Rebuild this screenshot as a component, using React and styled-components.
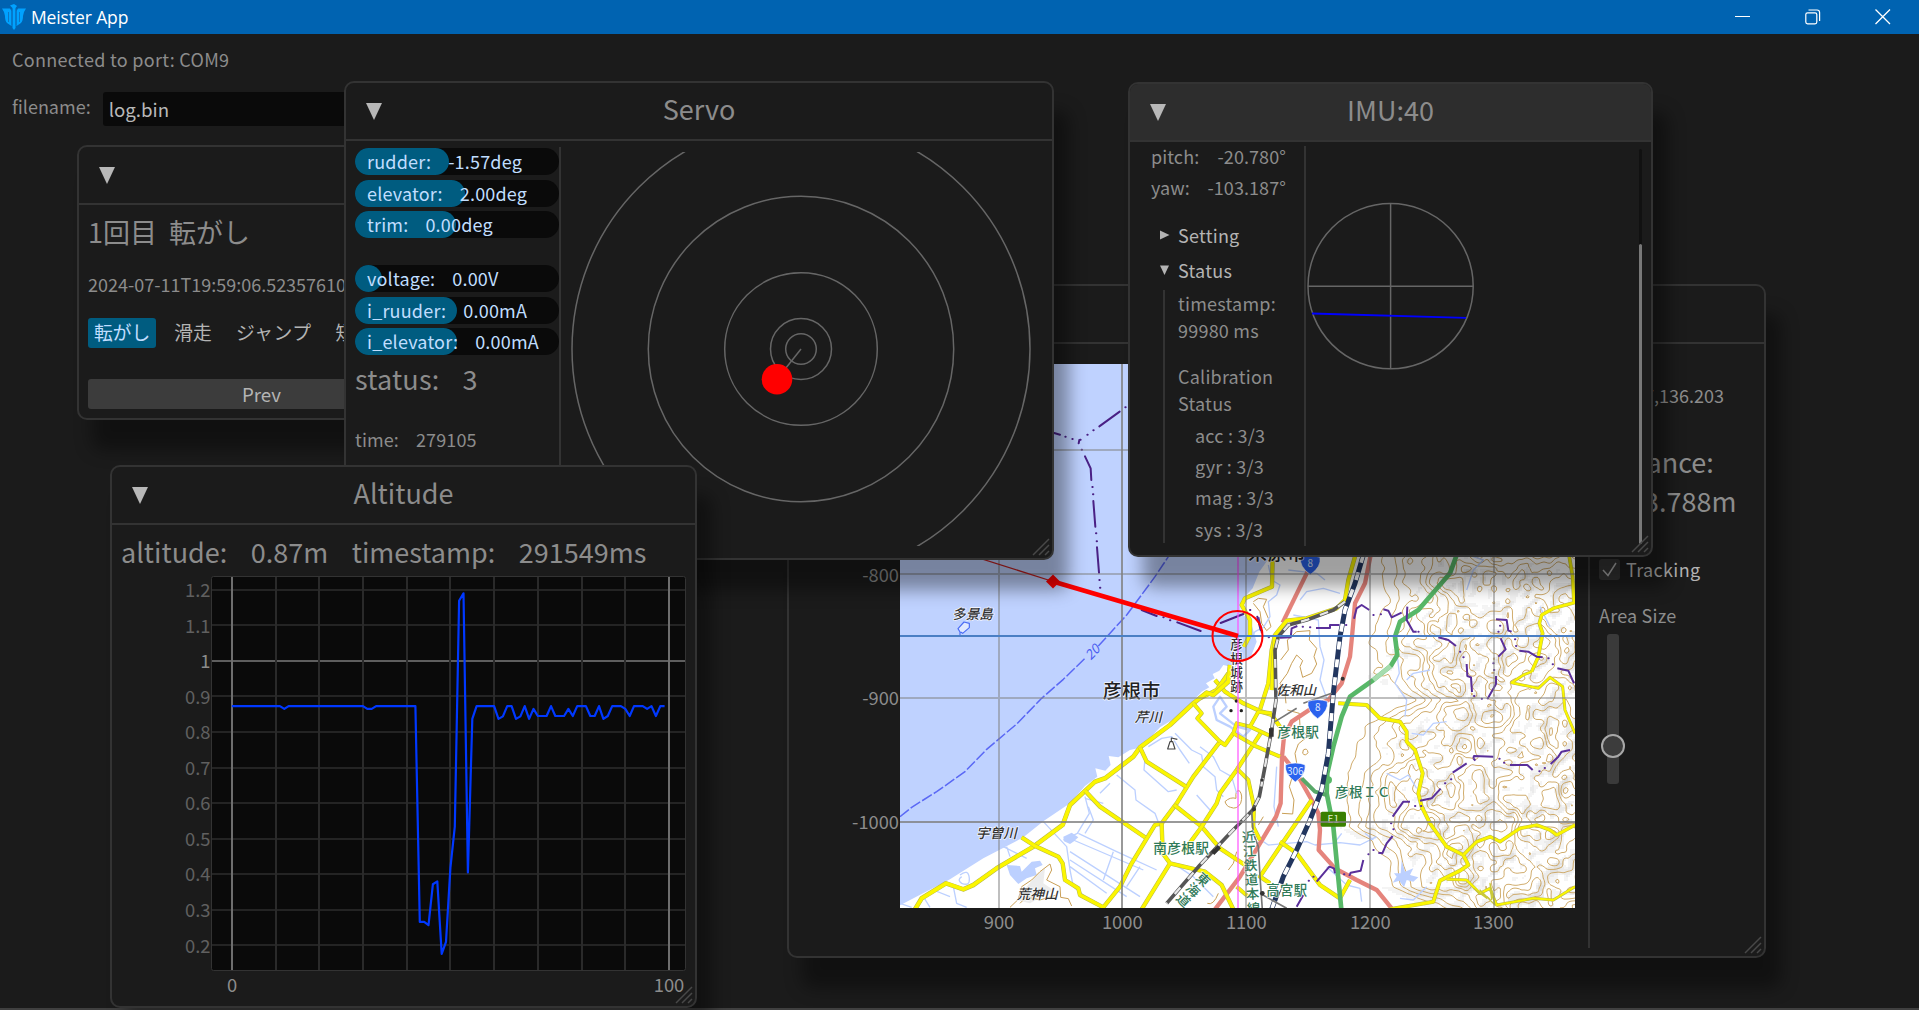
import React from "react";
import styled, { createGlobalStyle } from "styled-components";

const SANS = `"Noto Sans CJK JP", "Noto Sans", sans-serif`;

const Global = createGlobalStyle`
  *, *::before, *::after { box-sizing: border-box; }
  body {
    margin: 0;
    background: #1b1b1b;
    overflow: hidden;
    font-family: ${SANS};
    font-size: 18px;
    color: #8c8c8c;
  }
`;

const Screen = styled.div`
  width: 1919px;
  height: 1010px;
  display: flex;
  flex-direction: column;
  background: #1b1b1b;
  overflow: hidden;
`;

const TitleBar = styled.header`
  flex: none;
  height: 34px;
  display: flex;
  align-items: center;
  background: #0063b1;
  color: #fff;
`;

const AppIcon = styled.svg`
  width: 24px;
  height: 26px;
  margin-left: 2px;
`;

const AppName = styled.div`
  flex: 1;
  margin-left: 5px;
  font-family: "Open Sans", "Noto Sans", sans-serif;
  font-size: 17.5px;
  line-height: 34px;
  letter-spacing: -0.12px;
`;

const Caption = styled.button`
  width: 70px;
  height: 34px;
  padding: 0 2px 0 0;
  border: 0;
  background: none;
  display: grid;
  place-items: center;
  svg { display: block; fill: none; stroke: #fff; }
`;

const Desktop = styled.main`
  position: relative;
  flex: 1;
  border-bottom: 2px solid #404040;
`;

const Root = styled.div`
  padding: 9px 12px;
`;

const PortLine = styled.div`
  line-height: 32px;
  letter-spacing: 0.3px;
`;

const FileRow = styled.div`
  display: flex;
  align-items: flex-start;
  gap: 12px;
  margin-top: 17px;
  line-height: 28px;
`;

const FileInput = styled.div`
  width: 420px;
  height: 34px;
  padding-left: 6px;
  border-radius: 3px;
  background: #0a0a0a;
  color: #b8b8b8;
  font-size: 18.7px;
  line-height: 34px;
`;

const Frame = styled.section`
  position: absolute;
  left: ${(p) => p.$x}px;
  top: ${(p) => p.$y - 34}px;
  width: ${(p) => p.$w}px;
  height: ${(p) => p.$h}px;
  display: flex;
  flex-direction: column;
  border: 2px solid #333;
  border-radius: 10px;
  background: #1b1b1b;
  box-shadow: 15px 30px 17px rgba(0, 0, 0, 0.376);
`;

const FrameHead = styled.div`
  flex: none;
  height: 58px;
  display: grid;
  grid-template-columns: 58px 1fr 58px;
  align-items: center;
  border-bottom: 2px solid #333;
  border-radius: 8px 8px 0 0;
  background: ${(p) => (p.$active ? "#2d2d2d" : "transparent")};
`;

const Fold = styled.svg`
  width: 16px;
  height: 17px;
  margin-left: 20px;
  fill: #b8b8b8;
`;

const FrameTitle = styled.div`
  text-align: center;
  font-size: 27px;
  line-height: 56px;
  margin-top: -4px;
`;

const FrameBody = styled.div`
  flex: 1;
  min-height: 0;
  display: flex;
  flex-direction: ${(p) => (p.$row ? "row" : "column")};
`;

const Grip = styled.svg`
  position: absolute;
  right: 2px;
  bottom: 2px;
  width: 18px;
  height: 18px;
  stroke: #484848;
  stroke-width: 1.5;
`;

function Win({ x, y, w, h, title, active, row, grip = true, children }) {
  return (
    <Frame $x={x} $y={y} $w={w} $h={h}>
      <FrameHead $active={active}>
        <Fold viewBox="0 0 16 17"><path d="M0 0H16L8 17Z" /></Fold>
        <FrameTitle>{title}</FrameTitle>
      </FrameHead>
      <FrameBody $row={row}>{children}</FrameBody>
      {grip && (
        <Grip viewBox="0 0 18 18"><path d="M1 17L17 1M7 17L17 7M13 17L17 13" /></Grip>
      )}
    </Frame>
  );
}

/* ---------- log window ---------- */

const LogBody = styled.div`
  padding: 7px 9px;
  display: flex;
  flex-direction: column;
`;

const Heading = styled.div`
  font-size: 27px;
  line-height: 39px;
  margin-top: ${(p) => p.$mt || 0}px;
  white-space: pre;
`;

const Stamp = styled.div`
  margin-top: 19px;
  line-height: 28px;
  white-space: nowrap;
`;

const Chips = styled.div`
  display: flex;
  gap: 12px;
  margin-top: 20px;
`;

const Chip = styled.div`
  height: 30px;
  padding: 0 6px;
  border-radius: 3px;
  font-size: 18.8px;
  letter-spacing: ${(p) => (p.$wide ? 0.5 : 0)}px;
  line-height: 28px;
  background: ${(p) => (p.$on ? "#005c80" : "transparent")};
  color: ${(p) => (p.$on ? "#c0deff" : "#b4b4b4")};
`;

const NavRow = styled.div`
  display: flex;
  gap: 12px;
  margin-top: 31px;
`;

const NavButton = styled.div`
  width: 347px;
  height: 30px;
  border-radius: 3px;
  background: #3c3c3c;
  color: #b4b4b4;
  text-align: center;
  line-height: 29px;
  font-size: 18.7px;
`;

/* ---------- servo window ---------- */

const ServoSide = styled.div`
  width: 213px;
  padding: 7px 0 0 9px;
  display: flex;
  flex-direction: column;
`;

const Rule = styled.div`
  width: 2px;
  margin: ${(p) => p.$m || "6px 0 10px"};
  background: #333;
`;

const Bar = styled.div`
  position: relative;
  height: 27px;
  width: 204px;
  margin-bottom: 4.5px;
  margin-top: ${(p) => p.$mt || 0}px;
  border-radius: 14px;
  background: #0a0a0a;
  display: flex;
  gap: 17px;
  padding-left: 12px;
  color: #c0deff;
  line-height: 27.4px;
  letter-spacing: 0.2px;
  white-space: nowrap;
  span { position: relative; }
  &::before {
    content: "";
    position: absolute;
    left: 0;
    top: 0;
    height: 27px;
    width: ${(p) => p.$fill}px;
    border-radius: 14px;
    background: #005c80;
  }
`;

const Pair = styled.div`
  display: flex;
  gap: ${(p) => p.$gap}px;
  margin-top: ${(p) => p.$mt || 0}px;
  line-height: ${(p) => p.$lh || 28}px;
  font-size: ${(p) => p.$size || 18}px;
  letter-spacing: ${(p) => p.$track || 0}px;
  white-space: pre;
`;

const Plot = styled.svg`
  display: block;
  flex: none;
  margin: ${(p) => p.$m};
  text { font-family: ${SANS}; }
`;

const meters = [
  ["rudder:", "-1.57deg", 94, 0],
  ["elevator:", "2.00deg", 110, 0],
  ["trim:", "0.00deg", 101, 0],
  ["voltage:", "0.00V", 27, 22.5],
  ["i_ruuder:", "0.00mA", 101.5, 0],
  ["i_elevator:", "0.00mA", 101.5, 0],
];

function Servo() {
  return (
    <Win x={344} y={81} w={710} h={479} title="Servo" row>
      <ServoSide>
        {meters.map(([k, v, f, mt]) => (
          <Bar key={k} $fill={f} $mt={mt}><span>{k}</span><span>{v}</span></Bar>
        ))}
        <Pair $gap={23} $size={27} $lh={37} $track={0.2}><span>status:</span><span>3</span></Pair>
        <Pair $gap={17} $mt={28} $track={0.12}><span>time:</span><span>279105</span></Pair>
      </ServoSide>
      <Rule />
      <Plot $m="11px 0 0 9px" width="470" height="394" viewBox="570 152 470 394">
        <g fill="none" stroke="#666" strokeWidth="1.5">
          {[15.3, 30.5, 76.3, 152.7, 229].map((r) => (
            <circle key={r} cx="801" cy="349" r={r} />
          ))}
          <path d="M801 349L777 379.3" />
        </g>
        <circle cx="777" cy="379.3" r="15.3" fill="#f00" />
      </Plot>
    </Win>
  );
}

/* ---------- altitude window ---------- */

const V = 0.873;
const altitude = [
  ...Array(12).fill(V), 0.865, ...Array(18).fill(V), 0.865, 0.865, ...Array(10).fill(V),
  0.266, 0.266, 0.257, 0.372, 0.38, 0.176, 0.21, 0.418, 0.534, 1.169, 1.19, 0.405, 0.837,
  V, V, V, V, V, 0.837, 0.844, V, V, 0.837, 0.844, V, 0.837, 0.865, 0.845, 0.845, 0.845, V,
  0.845, 0.845, 0.845, 0.865, 0.845, V, V, V, 0.845, 0.845, V, 0.837, 0.845, V, V, V, 0.865,
  0.845, V, V, V, 0.865, V, 0.845, V, V,
];
const ax = (i) => 231.8 + i * 4.372;
const ay = (v) => 660.9 - (v - 1) * 355.6;

const AltBody = styled.div`
  display: flex;
  flex-direction: column;
  padding-left: 9px;
`;

function Altitude() {
  const levels = [0.2, 0.3, 0.4, 0.5, 0.6, 0.7, 0.8, 0.9, 1, 1.1, 1.2];
  return (
    <Win x={110} y={465} w={587} h={543} title="Altitude">
      <AltBody>
        <Pair $gap={23.5} $size={27} $lh={39} $mt={7}>
          <span>altitude:</span><span>0.87m</span><span>timestamp:</span><span>291549ms</span>
        </Pair>
        <Plot $m="4px 0 0 0" width="570" height="426" viewBox="121 575 570 426">
          <rect x="211.5" y="576.5" width="474" height="394" rx="2" fill="#0a0a0a" stroke="#333" strokeWidth="1" />
          <g stroke="#262626" strokeWidth="2">
            {levels.map((v) => (
              <path key={v} d={`M212 ${Math.round(ay(v))}H685`} stroke={v === 1 ? "#5e5e5e" : "#242424"} />
            ))}
            {Array.from({ length: 11 }, (_, i) => (
              <path key={i} d={`M${Math.round(ax(i * 10))} 577V970`} stroke={i % 10 ? "#2a2a2a" : "#6e6e6e"} />
            ))}
          </g>
          <polyline
            points={altitude.map((v, i) => `${ax(i).toFixed(1)},${ay(v).toFixed(1)}`).join(" ")}
            fill="none" stroke="#0038ff" strokeWidth="2.2" strokeLinejoin="round"
          />
          <g fontSize="18.4" textAnchor="end" fill="#606060">
            {levels.map((v) => (
              <text key={v} x="210.5" y={ay(v) + 7.2} fill={v === 1 ? "#8c8c8c" : "#606060"}>{v}</text>
            ))}
          </g>
          <g fontSize="18.4" textAnchor="middle" fill="#8c8c8c">
            <text x="232" y="992">0</text>
            <text x="669" y="992">100</text>
          </g>
        </Plot>
      </AltBody>
    </Win>
  );
}

/* ---------- IMU window ---------- */

const ImuSide = styled.div`
  width: 174px;
  padding: 0 0 0 21px;
  display: flex;
  flex-direction: column;
`;

const Reading = styled.div`
  display: flex;
  justify-content: space-between;
  width: 135px;
  height: 31.2px;
  line-height: 28px;
  letter-spacing: 0.08px;
`;

const Tree = styled.div`
  display: flex;
  align-items: center;
  gap: 8px;
  margin-top: ${(p) => p.$mt}px;
  padding-left: 8px;
  height: 28px;
  color: #b4b4b4;
  line-height: 28px;
  letter-spacing: 0.25px;
  svg { width: 11px; height: 10px; fill: #b4b4b4; margin-bottom: 1px; }
`;

const Branch = styled.div`
  margin: 6px 0 0 12px;
  padding-left: 13px;
  height: 253px;
  border-left: 2px solid #333;
  line-height: 27px;
  letter-spacing: 0.22px;
`;

const CalTitle = styled.div`
  margin-top: 19px;
`;

const CalList = styled.div`
  padding-left: 17px;
  margin-top: 2.5px;
  line-height: 31.3px;
`;

const ScrollTrack = styled.div`
  width: 3px;
  margin: 7px 9px 11px auto;
  background: #111;
  border-radius: 2px;
  display: flex;
  flex-direction: column;
  justify-content: flex-end;
`;

const ScrollThumb = styled.div`
  height: 300px;
  border-radius: 2px;
  background: #787878;
`;

function Imu() {
  return (
    <Win x={1128} y={82} w={525} h={475} title="IMU:40" active row>
      <ImuSide>
        <Reading><span>pitch:</span><span>-20.780°</span></Reading>
        <Reading><span>yaw:</span><span>-103.187°</span></Reading>
        <Tree $mt={17}>
          <svg viewBox="0 0 11 10"><path d="M1 0.5V9.5L10.5 5Z" /></svg>Setting
        </Tree>
        <Tree $mt={7}>
          <svg viewBox="0 0 11 10"><path d="M1 0.5H10L5.5 10Z" /></svg>Status
        </Tree>
        <Branch>
          <div>timestamp:<br />99980 ms</div>
          <CalTitle>Calibration<br />Status</CalTitle>
          <CalList>
            {["acc", "gyr", "mag", "sys"].map((s) => <div key={s}>{s} : 3/3</div>)}
          </CalList>
        </Branch>
      </ImuSide>
      <Rule $m="4px 0 9px" />
      <Plot $m="56px 0 0 -1px" width="176" height="180" viewBox="1305 198 176 180">
        <g fill="none" stroke="#666" strokeWidth="1.5">
          <circle cx="1390.6" cy="286.2" r="82.6" />
          <path d="M1390.6 203.6V368.8M1308 286.2H1473" />
          <path d="M1312 313.5L1466 317.8" stroke="#00f" strokeWidth="1.8" />
        </g>
      </Plot>
      <ScrollTrack><ScrollThumb /></ScrollTrack>
    </Win>
  );
}

/* ---------- map window ---------- */

const MapSide = styled.div`
  flex: 1;
  padding: 37px 0 0 9px;
  display: flex;
  flex-direction: column;
`;

const Coords = styled.div`
  line-height: 28px;
  height: 28px;
`;

const CheckRow = styled.div`
  display: flex;
  align-items: center;
  gap: 6px;
  height: 28px;
  margin-top: 35px;
  color: #b4b4b4;
  letter-spacing: 0.35px;
`;

const CheckBox = styled.svg`
  width: 21px;
  height: 21px;
  border-radius: 3px;
  background: #333;
  fill: none;
  stroke: #a8a8a8;
  stroke-width: 1.5;
`;

const SliderLabel = styled.div`
  margin-top: 18px;
  line-height: 28px;
  letter-spacing: 0.2px;
`;

const SliderRail = styled.div`
  position: relative;
  width: 12px;
  height: 150px;
  margin: 5px 0 0 8px;
  border-radius: 3px;
  background: #3a3a3a;
`;

const SliderKnob = styled.div`
  position: absolute;
  left: -6px;
  top: 100px;
  width: 24px;
  height: 24px;
  border-radius: 50%;
  border: 2px solid #a8a8a8;
  background: #3c3c3c;
`;

/* smooth value noise for the terrain */
const hash = (x, y) => {
  const s = Math.sin(x * 127.1 + y * 311.7) * 43758.5453;
  return s - Math.floor(s);
};
const noise = (x, y) => {
  const xi = Math.floor(x), yi = Math.floor(y);
  const f = (t) => t * t * (3 - 2 * t);
  const u = f(x - xi), v = f(y - yi);
  const a = hash(xi, yi), b = hash(xi + 1, yi), c = hash(xi, yi + 1), d = hash(xi + 1, yi + 1);
  return a + (b - a) * u + (c - a) * v + (a - b - c + d) * u * v;
};
/* western foot of the hills at each height, in map detail units */
const foot = [[40, 505], [180, 520], [300, 460], [400, 470], [480, 600], [560, 440], [700, 390], [860, 410], [900, 480], [960, 520], [1040, 540], [1110, 700]];
const footAt = (y) => {
  for (let i = 1; i < foot.length; i++) {
    if (y <= foot[i][0]) {
      const [y0, x0] = foot[i - 1], [y1, x1] = foot[i];
      return x0 + ((x1 - x0) * (y - y0)) / (y1 - y0);
    }
  }
  return 700;
};
const height = (x, y) => {
  const edge = Math.min(1, Math.max(0, (x - footAt(y)) / 240));
  return edge * (0.25 + 0.55 * noise(x / 125, y / 125) + 0.42 * noise(x / 44 + 9, y / 44) + 0.22 * noise(x / 21, y / 21 + 5));
};
const terrain = (() => {
  const S = 6;
  let lines = "";
  const shade = ["", "", ""];
  const levels = [0.16, 0.3, 0.44, 0.58, 0.72, 0.86, 1.0, 1.14];
  for (let y = 45; y < 1110; y += S) {
    for (let x = 390; x < 1130; x += S) {
      const a = height(x, y), b = height(x + S, y), c = height(x + S, y + S), d = height(x, y + S);
      const slope = a - c;
      if (slope > 0.015) {
        const k = slope > 0.085 ? 2 : slope > 0.045 ? 1 : 0;
        shade[k] += `M${x} ${y}h${S}v${S}h-${S}z`;
      }
      for (const l of levels) {
        const p = [];
        if (a < l !== b < l) p.push([x + (S * (l - a)) / (b - a), y]);
        if (b < l !== c < l) p.push([x + S, y + (S * (l - b)) / (c - b)]);
        if (d < l !== c < l) p.push([x + (S * (l - d)) / (c - d), y + S]);
        if (a < l !== d < l) p.push([x, y + (S * (l - a)) / (d - a)]);
        for (let i = 0; i + 1 < p.length; i += 2) {
          lines += `M${p[i][0].toFixed(1)} ${p[i][1].toFixed(1)}L${p[i + 1][0].toFixed(1)} ${p[i + 1][1].toFixed(1)}`;
        }
      }
    }
  }
  return { lines, shade };
})();

const Road = ({ d, w = 10 }) => (
  <>
    <path d={d} stroke="#b8b84a" strokeWidth={w + 3} />
    <path d={d} stroke="#fbf600" strokeWidth={w} />
  </>
);

const Rail = ({ d, w = 9, dark = "#555", light = "#e8e8e8", dash = "26 34" }) => (
  <>
    <path d={d} stroke={dark} strokeWidth={w} />
    <path d={d} stroke={light} strokeWidth={w - 4} strokeDasharray={dash} />
  </>
);

const Shield = ({ x, y, n }) => (
  <g transform={`translate(${x} ${y})`}>
    <path d="M-29 -20Q0 -30 29 -20Q34 8 0 32Q-34 8 -29 -20Z" fill="#2b62ee" stroke="#fff" strokeWidth="2" />
    <text y="10" textAnchor="middle" fill="#dfe8ff" fontSize="30" textLength={n.length > 1 ? 50 : undefined} lengthAdjust="spacingAndGlyphs">{n}</text>
  </g>
);

const Label = ({ x, y, size = 40, fill = "#333", italic, rot, vertical, children, sp = 0 }) => (
  <text
    x={x} y={y} fontSize={size} fill={fill} letterSpacing={sp} fontWeight="500"
    fontStyle={italic ? "italic" : "normal"}
    writingMode={vertical ? "vertical-rl" : undefined}
    transform={rot ? `rotate(${rot} ${x} ${y})` : undefined}
    stroke="#fff" strokeWidth="5" strokeOpacity="0.75" paintOrder="stroke" strokeLinejoin="round"
  >
    {children}
  </text>
);

const coast =
  "M1300 -700V0L1290 20L1258 65L1238 115L1205 150L1200 185L1232 215L1250 275L1232 322L1180 340L1172 350L1150 345L1138 362L1118 372L1124 385L1098 400L1108 412L1085 425L1050 462L1000 508L960 532L905 592L870 600L835 622L806 618L812 645L796 662L766 655L772 680L735 708L690 760L612 812L550 862L430 925L330 988L180 1066V1120H2300V-700Z";

function MapArt() {
  return (
    <>
      <rect x="900" y="364" width="675" height="544" fill="#bfd2ff" />
      <g transform="translate(840 550) scale(0.33333)" fill="none" strokeLinejoin="round" strokeLinecap="butt">
        <path d={coast} fill="#fff" />
        <g transform="translate(1080 -30)">
          <path d={terrain.shade[0]} fill="#f4f4f4" />
          <path d={terrain.shade[1]} fill="#ebebeb" />
          <path d={terrain.shade[2]} fill="#e0e0e0" />
          <path d={terrain.lines} stroke="#cba35c" strokeWidth="2.7" />
          <g stroke="#c99f55" strokeWidth="3">
            <path d="M160 185L175 175L200 178L190 200L205 235L213 260L200 272L185 250L180 215L160 190" />
            <path d="M242 360L265 330L262 300L290 275L330 272L328 300L350 325L342 350L350 372L335 400L308 412L300 380L308 362L290 345L275 370L262 400L240 430L255 460L258 490" />
            <path d="M262 510L298 520L300 560L322 590L295 612L285 640L292 680L280 700L268 740L282 780L278 822L246 820" />
            <path d="M310 630Q322 622 324 638Q316 650 308 640Z" />
            <path d="M75 785Q90 770 108 775Q105 750 118 752Q130 765 122 790Q110 810 92 802Q80 800 75 785Z" />
            <path d="M55 1060Q40 1098 22 1090M110 935L100 970L85 990M190 830L175 855" />
          </g>
          <g stroke="#bcd0ff" strokeWidth="4">
            <path d="M205 75L215 120L240 135L230 165L205 185L210 230L190 262L165 275L130 340L100 390" />
            <path d="M265 90L350 100L375 120M300 180L320 155L370 145L420 160M280 225L355 240L360 320L372 360L360 420L382 480" />
            <path d="M590 330L598 400L585 430L620 480L615 530M620 420L640 400L690 390M740 545L700 550L670 585L635 580" />
            <path d="M190 905L205 915L320 905L345 915L420 908L480 915L530 890M410 900L425 880M230 680L222 800L235 860" />
            <path d="M0 620L40 650L60 690L95 710L110 760M380 980L440 1035L480 1045L485 1085M680 1040L640 1080L600 1075M820 50L850 60L820 90L800 150" />
            <path d="M495 880L520 900M1020 200L1050 260M560 700L600 720L625 705L650 745" />
            <path d="M40 500L60 470L80 500L60 520L110 560L150 570L130 590L90 560L50 540Z" strokeWidth="7" />
          </g>
          <path d="M605 960L615 995L640 985L630 1005L655 1012L640 1025L620 1020L612 1042L598 1022L578 1028L590 1010L582 1000L602 1000Z" fill="#bcd0ff" />
        </g>
        <g stroke="#bcd0ff" strokeWidth="4">
          <path d="M1005 550L1055 600L1085 615L1090 650L1125 680L1130 720L1150 740M925 590L965 565L995 560L1020 600L1048 640M915 625L912 660L985 725L1010 720M830 675L885 720L888 750L945 790L960 830M735 740L748 790L712 850L670 870M735 745L790 760M1070 735L1110 780" />
          <path d="M610 815L680 890L690 960L700 1010L760 1060M715 850L830 905L950 960M690 905L900 1040M745 770L760 810L735 850M690 930L860 1040M690 950L800 1030M700 870L910 960M860 1010L900 950M790 990L820 905M500 890L510 920M490 890L560 925M340 1010L350 1060L380 1072M280 1020L330 1040M180 1060L215 1072M250 1040L270 1072M780 730L810 700M1000 940L1060 980L1120 1040" />
          <path d="M360 975Q385 955 388 985Q390 1010 365 1000Q350 990 365 980" />
        </g>
        <g fill="#bcd0ff">
          <path d="M500 945L540 948L545 965L575 935L600 932L608 945L585 955L590 975L560 985L535 1002L510 975Z" />
          <path d="M670 860L695 848L715 862L700 875L690 882L672 874Z" />
        </g>
        <path d="M590 975L615 955L610 1000L640 1020L570 1060L530 1050L560 1010Z" fill="#ddd" fillOpacity="0.55" />
        <g stroke="#c99f55" strokeWidth="3">
          <path d="M510 1072L535 1048L545 1010L575 990L600 965L630 942L635 960L620 990L660 1010L662 1042L685 1046L695 1068" />
          <path d="M540 1060L560 1040L600 1050L650 1035" />
        </g>
        <path d="M360 256V246L354 236L372 216L388 220L388 233L368 250L362 246" stroke="#4a6cf5" strokeWidth="3.5" fill="#dfe8ff" />

        {/* depth line and boundaries */}
        <path d="M180 800L215 772L290 725L375 665L440 598L530 522L605 445L670 388L735 325M775 288L860 195L945 80L985 20L1040 -80" stroke="#5a68f5" strokeWidth="4.5" strokeDasharray="34 7" />
        <g stroke="#4a2085" strokeWidth="6" strokeLinecap="round">
          <path d="M620 -358L660 -346M676 -340h1M697 -333h1M716 -320L718 -330L722 -331M742 -346h1M760 -359h1M778 -371L839 -415M856 -428h1" />
          <path d="M725 -301h1M735 -281L752 -245L754 -210M757 -189h1M759 -167h1M760 -147L766 -70M768 -50h1M770 -26h1M771 -8L777 68M778 90h1M780 113h1M905 180L950 198M970 202h1M990 211h1M1012 217L1082 243M1142 219L1210 192M1230 180h1M1252 200L1262 240" />
        </g>

        {/* main roads */}
        <g transform="translate(1080 -30)">
          <g stroke="#e5847c" strokeWidth="13">
            <path d="M330 80L248 248" />
            <path d="M512 45L495 130L465 190L456 290L450 350L425 430L385 480L350 495L275 545L252 590L246 650L242 790L228 830L180 910L120 1010L45 1108" />
            <path d="M250 650L290 700L335 780L355 820L360 870L356 930L405 985L470 1020L530 1050L575 1105" />
          </g>
          <Road d="M218 50L216 140L135 175L125 195L150 240L150 285L132 320" />
          <Road d="M465 50L445 120L435 180L410 205L320 235L260 242L225 285L215 330L205 430L178 515" />
          <Road d="M1107 45L1118 110L1122 188L1060 205L1025 225L1018 250L1028 280L1015 350L995 395" w={8} />
          <Road d="M995 395L970 405L935 428L1015 445L1050 412L1088 440L1095 510L1125 580" w={6} />
          <Road d="M415 490L500 495L540 535L600 545L620 575L620 605L645 630L668 700L655 760L665 800L690 850L740 920L790 945L805 975L780 992L720 1022L700 1085L570 1108" w={9} />
          <Road d="M790 945L830 905L870 890L900 905L960 865L1010 855L1050 870L1070 885L1125 855" w={8} />
          <Road d="M740 1018L800 1020L840 1060L870 1045L890 1095L1000 1075L1060 1080L1125 1040" w={6} />
          <path d="M820 1045L860 1075L840 1050L885 1095L870 1030L875 1080" stroke="#c9c93a" strokeWidth="4" />
          <Road d="M335 780L240 920L180 1010L210 1030" />
          <Road d="M240 905L290 940L360 1035L420 1075L450 1020" />
          <Road d="M225 285L215 450M45 420L75 455L130 490L185 515L215 525L240 560" />
          <Road d="M85 400L50 450L0 475" />
        </g>
        <Road d="M225 1078L245 1045L318 1000L370 1018L400 1005L470 955L580 890L668 825L690 765L765 695L795 685L880 620L900 592L990 525L1060 460L1100 428L1120 435L1165 395L1170 345" w={11} />
        <Road d="M545 862L585 888L655 920L668 940L675 990L715 1015L720 1035L790 1072L840 1010L875 940L945 825L965 820L1010 760L1060 680L1140 575L1155 585L1180 550" />
        <Road d="M735 722L780 770L915 862M900 592L920 635L1038 710M1003 765L1085 830L1140 895L1215 945" />
        <Road d="M965 820L968 910L990 940L905 1078M990 940L1095 965L1145 1005L1180 1078M1030 905L1085 830L1130 760L1140 730L1190 660L1265 545" />
        <Road d="M1060 460L1085 490L1072 505L1140 575M1180 550L1190 520L1230 530L1295 560M1180 550L1250 590L1320 620M1295 490L1255 485L1230 530M1190 655L1225 690L1242 770L1240 830L1260 870M1190 1010L1225 1040" w={9} />

        {/* expressway and railways */}
        <g transform="translate(1080 -30)">
          <path d="M770 45L750 100L655 210L600 245L585 290L592 345L572 378L520 420L450 470L425 530L400 620L382 700L380 760L400 860L424 1108" stroke="#58b868" strokeWidth="14" />
          <path d="M572 378L520 420" stroke="#a5dcae" strokeWidth="14" />
          <path d="M305 715L345 755L380 765" stroke="#58a868" strokeWidth="12" />
          <circle cx="385" cy="720" r="11" fill="#58b868" />
          <Rail d="M490 45L465 130L435 210L420 290L400 460L385 640L365 750L330 840L290 930L250 1010L215 1108" w={15} dark="#22365f" light="#fff" dash="24 30" />
          <Rail d="M435 185L400 210L320 240L265 255L235 290L225 330L228 480L215 570L195 680L178 770L158 810L90 880L0 975L-100 1090" w={11} />
          <path d="M155 815L160 880L175 920L180 1010L187 1108M180 1060L260 1105M225 545L290 505M310 490L395 460" stroke="#777" strokeWidth="5" />
          <path d="M214 590V565M38 940l20 -20" stroke="#333" strokeWidth="14" />
          <g fill="#333"><circle cx="187" cy="1060" r="7" /><circle cx="162" cy="808" r="6" /><circle cx="428" cy="416" r="6" /><circle cx="186" cy="720" r="5" /></g>
          <g stroke="#5a2f9a" strokeWidth="6">
            <path d="M175 232L186 280M240 293L272 292L275 265L292 258M348 264H390V255H415M462 236L470 205L485 195L508 210M550 208L565 212L575 232L605 218M622 200L620 240L640 275L650 275M715 292L745 300L768 318M800 372L802 408L813 412L816 456M888 408V432L862 478M888 238L920 240L925 272L935 275M902 295L917 328L895 350M958 332L985 335L1010 350L1028 352M1072 385L1105 392L1122 430M820 655L822 648L880 650M820 655L826 662M930 675H982L998 690M1052 672L1075 650L1085 635L1110 630M758 698L800 670M722 746L695 775L660 782M578 830L610 785L630 785M578 888L560 910L547 940L535 938M490 960L482 992L452 998L448 1008M350 1025L388 980L402 985L405 1000M310 1065L290 1100" />
            <path strokeLinecap="round" d="M206 292h1M308 260h1M330 262h1M415 255h1M438 255h1M520 225h1M542 223h1M680 288h1M655 275h1M780 335h1M790 352h1M822 468h1M845 476h1M882 390h1M880 370h1M895 275h1M900 257h1M945 298h1M948 318h1M1045 355h1M1058 373h1M898 656h1M912 668h1M1018 694h1M1034 684h1M735 730h1M753 718h1M645 798h1M663 798h1M573 850h1M580 868h1M505 943h1M520 930h1M432 1003h1M326 1022h1M340 1010h1" />
          </g>
          <Shield x={331} y={72} n="8" />
          <Shield x={353} y={504} n="8" />
          <Shield x={286} y={694} n="306" />
          <rect x="362" y="815" width="76" height="45" rx="5" fill="#3a8000" />
          <text x="400" y="849" textAnchor="middle" fontSize="30" fill="#e0f0d0">E1</text>
          <Label x={145} y={61} size={56} fill="#222" sp={2}>米原市</Label>
          <Label x={228} y={466} size={40} italic>佐和山</Label>
          <Label x={232} y={591} size={41} fill="#2f7a58" sp={1}>彦根駅</Label>
          <Label x={405} y={772} size={40} fill="#2f7a58" sp={2}>彦根ＩＣ</Label>
          <Label x={199} y={1064} size={40} fill="#2f7a58" sp={1}>高宮駅</Label>
          <Label x={144} y={870} size={40} fill="#2f7a58" sp={3} rot={-4} vertical>近江鉄道本線</Label>
        </g>
        <Label x={336} y={208} size={41} italic>多景島</Label>
        <Label x={788} y={443} size={57} fill="#222" sp={1}>彦根市</Label>
        <Label x={884} y={517} size={41} italic>芹川</Label>
        <Label x={408} y={864} size={41} italic>宇曽川</Label>
        <Label x={530} y={1046} size={41} italic>荒神山</Label>
        <Label x={940} y={910} size={41} fill="#2f7a58" sp={1}>南彦根駅</Label>
        <Label x={1104} y={974} size={40} fill="#2f7a58" rot={44} sp={3} vertical>東海道</Label>
        <Label x={1190} y={263} size={38} fill="#333" sp={4} vertical>彦根城跡</Label>
        <g fill="#222"><circle cx="1189" cy="453" r="5" /><circle cx="1173" cy="482" r="5" /><circle cx="1204" cy="482" r="5" /></g>
        <text x="752" y="332" fontSize="40" fill="#4a5cf0" fontStyle="italic" transform="rotate(-46 752 332)">20</text>
        <path d="M983 597H1005L998 575H990ZM994 575V564L1012 568" stroke="#444" strokeWidth="3.5" fill="#fff" />
      </g>

      {/* graticule */}
      <g stroke="#808080" strokeOpacity="0.5" strokeWidth="2">
        <path d="M999 364V908M1246 364V908M1370 364V908M1494 364V908M900 450H1575M900 574H1575M900 698H1575" />
        <path d="M1122 364V908M900 822H1575" strokeOpacity="0.8" />
      </g>
      <path d="M1238 364V908" stroke="#ff50ff" strokeOpacity="0.6" strokeWidth="2" />
      <path d="M900 636H1575" stroke="#4a7fc4" strokeWidth="2" />
      <g stroke="#f00" fill="none">
        <path d="M900 533L1053 581.5" strokeWidth="1.3" stroke="#c02020" />
        <path d="M1053 581.5L1238 636" strokeWidth="4.5" />
        <path d="M1046 581.5L1053 574.5L1060 581.5L1053 588.5Z" fill="#f00" stroke="none" />
        <circle cx="1237.5" cy="636" r="25" strokeWidth="2" />
      </g>
    </>
  );
}

function MapWindow() {
  return (
    <Win x={787} y={284} w={979} h={674} title="" row>
      <Plot $m="2px 12px 0 25px" width="762" height="604" viewBox="814 346 762 604">
        <svg x="900" y="364" width="675" height="544" viewBox="900 364 675 544"><MapArt /></svg>
        <g fontSize="18.3" fill="#8c8c8c" textAnchor="end">
          <text x="899" y="581.5">-800</text>
          <text x="899" y="704.5">-900</text>
          <text x="899" y="828.5">-1000</text>
        </g>
        <g fontSize="18.4" fill="#8c8c8c" textAnchor="middle">
          <text x="999" y="929">900</text>
          <text x="1122.3" y="929">1000</text>
          <text x="1246.3" y="929">1100</text>
          <text x="1370.3" y="929">1200</text>
          <text x="1493.3" y="929">1300</text>
        </g>
      </Plot>
      <Rule $m="6px 0 8px" />
      <MapSide>
        <Coords>35.297,136.203</Coords>
        <Heading $mt={33}>{"Distance:\n1853.788m"}</Heading>
        <CheckRow>
          <CheckBox viewBox="0 0 21 21"><path d="M4 11L9 16.5L17 4" /></CheckBox>Tracking
        </CheckRow>
        <SliderLabel>Area Size</SliderLabel>
        <SliderRail><SliderKnob /></SliderRail>
      </MapSide>
    </Win>
  );
}

export default function App() {
  return (
    <Screen>
      <Global />
      <TitleBar>
        <AppIcon viewBox="0 0 24 26">
          <g fill="#00a2ff">
            <path d="M0 4.5H8L9.5 7V22L5 19Q3 17 3 12L2 8Z" />
            <path d="M24 4.5H16L14.5 7V22L19 19Q21 17 21 12L22 8Z" />
            <path d="M8 1.5L12 0L15 2L13.5 4V24L12 26L10.5 24V4Z" />
          </g>
          <path d="M10 5V21M14 5V21M6.5 8V18M17.5 8V18" stroke="#0c70bf" strokeWidth="0.9" />
        </AppIcon>
        <AppName>Meister App</AppName>
        <Caption><svg width="16" height="16"><path d="M0 7.5H15" strokeWidth="1" /></svg></Caption>
        <Caption>
          <svg width="16" height="16" viewBox="0 0 16 16" strokeWidth="1.2">
            <rect x="0.8" y="3.8" width="11" height="11" rx="1.8" />
            <path d="M3.5 1H12Q14.6 1 14.6 3.6V12" />
          </svg>
        </Caption>
        <Caption><svg width="16" height="16"><path d="M0.5 0.5L15 15M15 0.5L0.5 15" strokeWidth="1.3" /></svg></Caption>
      </TitleBar>
      <Desktop>
        <Root>
          <PortLine>Connected to port: COM9</PortLine>
          <FileRow><span>filename:</span><FileInput>log.bin</FileInput></FileRow>
        </Root>
        <Win x={77} y={145} w={730} h={275} title="" grip={false}>
          <LogBody>
            <Heading>{"1回目  転がし"}</Heading>
            <Stamp>2024-07-11T19:59:06.52357610</Stamp>
            <Chips>
              <Chip $on>転がし</Chip><Chip>滑走</Chip><Chip $wide>ジャンプ</Chip><Chip>短</Chip>
            </Chips>
            <NavRow><NavButton>Prev</NavButton></NavRow>
          </LogBody>
        </Win>
        <MapWindow />
        <Servo />
        <Altitude />
        <Imu />
      </Desktop>
    </Screen>
  );
}
